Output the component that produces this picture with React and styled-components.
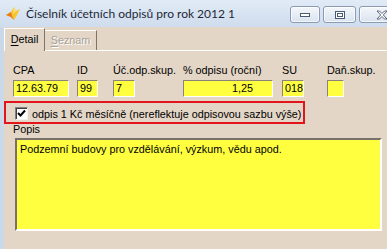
import styled, { createGlobalStyle } from "styled-components";

const GlobalStyle = createGlobalStyle`
  html, body {
    margin: 0;
    padding: 0;
    background: #e3d6c6;
  }
`;

const Window = styled.div`
  width: 387px;
  height: 249px;
  display: flex;
  flex-direction: column;
  overflow: hidden;
  background: #e3d6c6;
  font-family: "Liberation Sans", Arial, sans-serif;
  font-size: 10.8px;
  color: #000;
`;

const TitleBar = styled.div`
  height: 27px;
  flex-shrink: 0;
  display: flex;
  align-items: center;
  padding-left: 5px;
  background: linear-gradient(#e1ebf6, #cfdced);
`;

const Title = styled.span`
  margin-left: 5px;
  font-family: "Lato", "Liberation Sans", sans-serif;
  font-size: 12px;
  color: #1e2838;
  white-space: nowrap;
`;

const Controls = styled.div`
  margin-left: auto;
  margin-right: -18px;
  align-self: flex-start;
  margin-top: 6px;
  display: flex;
  gap: 3px;
  flex-shrink: 0;
`;

const CtrlButton = styled.div`
  width: ${(p) => p.$w}px;
  height: 15px;
  border: 1px solid #8a9ab3;
  border-radius: 3px;
  background: linear-gradient(#f4f7fb, #dae3ef);
  box-shadow: inset 0 0 0 1px rgba(255, 255, 255, 0.7);
  display: flex;
  align-items: center;
  justify-content: center;
`;

const Body = styled.div`
  flex: 1;
  display: flex;
  flex-direction: column;
  border-left: 4px solid #cad9ea;
`;

const TabStrip = styled.div`
  height: 23px;
  display: flex;
  align-items: flex-end;
`;

const Tab = styled.div`
  box-sizing: border-box;
  height: ${(p) => (p.$active ? 23 : 20)}px;
  width: ${(p) => p.$w}px;
  margin-bottom: ${(p) => (p.$active ? -1 : 0)}px;
  position: relative;
  z-index: ${(p) => (p.$active ? 1 : 0)};
  border-left: ${(p) => (p.$active ? "1px solid #fff" : "none")};
  border-top: 1px solid #fff;
  border-right: 1px solid #7d7467;
  background: #e3d6c6;
  display: flex;
  align-items: center;
  justify-content: center;
  padding-bottom: ${(p) => (p.$active ? 3 : 1)}px;
  color: ${(p) => (p.$active ? "#000" : "#a9a39a")};
  text-shadow: ${(p) => (p.$active ? "none" : "1px 1px 0 #fff")};

  u {
    text-decoration: underline;
    text-underline-offset: 2px;
  }
`;

const Panel = styled.div`
  flex: 1;
  border-top: 1px solid #fff;
  padding-top: 13px;
  display: flex;
  flex-direction: column;
`;

const FieldsRow = styled.div`
  display: flex;
  padding-left: 9px;
`;

const Field = styled.div`
  width: ${(p) => p.$w}px;
  display: flex;
  flex-direction: column;
  flex-shrink: 0;
`;

const Label = styled.div`
  line-height: 13px;
  height: 13px;
  white-space: nowrap;
  margin-bottom: 3px;
`;

const Input = styled.div`
  box-sizing: border-box;
  width: ${(p) => p.$w}px;
  height: 17px;
  background: #ffff40;
  border-top: 1px solid #8a8378;
  border-left: 1px solid #8a8378;
  border-right: 1px solid #fff;
  border-bottom: 1px solid #fff;
  line-height: 15px;
  padding: 0 ${(p) => (p.$right ? 19 : 2)}px 0 2px;
  text-align: ${(p) => (p.$right ? "right" : "left")};
  white-space: nowrap;
`;

const CheckRow = styled.label`
  box-sizing: border-box;
  width: 301px;
  height: 23px;
  margin-top: 4px;
  border: 2px solid #e3141b;
  display: flex;
  align-items: center;
  padding: 2px 0 0 9px;
  gap: 4px;
  white-space: nowrap;
`;

const CheckBox = styled.span`
  box-sizing: border-box;
  width: 13px;
  height: 13px;
  background: #fff;
  border-top: 1px solid #808080;
  border-left: 1px solid #808080;
  border-right: 1px solid #f4f0ea;
  border-bottom: 1px solid #f4f0ea;
  box-shadow: inset 1px 1px 0 #404040;
  display: flex;
  align-items: center;
  justify-content: center;
`;

const PopisLabel = styled.div`
  margin: -1px 0 0 9px;
  line-height: 13px;
`;

const TextArea = styled.div`
  box-sizing: border-box;
  width: 367px;
  height: 93px;
  margin: 2px 0 0 11px;
  background: #ffff40;
  border-top: 2px solid #77716a;
  border-left: 2px solid #77716a;
  border-right: 2px solid #fff;
  border-bottom: 2px solid #fff;
  padding: 3px 3px;
  line-height: 13px;
`;

function AppIcon() {
  return (
    <svg width="16" height="15" viewBox="0 0 16 15">
      <path d="M1 9 L6 6 L9 1 L11 5 L15 3 L12 9 L9 14 L6 11 Z" fill="#f7c531" />
      <path d="M1 9 L6 6 L7 10 L9 14 L6 11 Z" fill="#e87a1c" />
      <path d="M9 1 L11 5 L8 8 Z" fill="#fbe07a" />
    </svg>
  );
}

export default function App() {
  return (
    <>
      <GlobalStyle />
      <Window>
        <TitleBar>
          <AppIcon />
          <Title>Číselník účetních odpisů pro rok 2012 1</Title>
          <Controls>
            <CtrlButton $w={28}>
              <svg width="10" height="5" viewBox="0 0 10 5">
                <rect x="0.5" y="1.5" width="9" height="3" fill="#fff" stroke="#4a5a72" />
              </svg>
            </CtrlButton>
            <CtrlButton $w={31}>
              <svg width="10" height="8" viewBox="0 0 10 8">
                <rect x="0.5" y="0.5" width="9" height="7" fill="#fff" stroke="#4a5a72" />
                <rect x="2.5" y="2.5" width="5" height="3" fill="none" stroke="#4a5a72" />
              </svg>
            </CtrlButton>
            <CtrlButton $w={44}>
              <svg width="12" height="10" viewBox="0 0 12 10">
                <path
                  d="M1 1 H3.5 L6 3.5 L8.5 1 H11 L7.3 5 L11 9 H8.5 L6 6.5 L3.5 9 H1 L4.7 5 Z"
                  fill="#fff"
                  stroke="#4a5a72"
                  strokeWidth="0.9"
                />
              </svg>
            </CtrlButton>
          </Controls>
        </TitleBar>
        <Body>
          <TabStrip>
            <Tab $active $w={41}>
              <span>
                <u>D</u>etail
              </span>
            </Tab>
            <Tab $w={52}>
              <span>
                <u>S</u>eznam
              </span>
            </Tab>
          </TabStrip>
          <Panel>
            <FieldsRow>
              <Field $w={64}>
                <Label>CPA</Label>
                <Input $w={56}>12.63.79</Input>
              </Field>
              <Field $w={36}>
                <Label>ID</Label>
                <Input $w={21}>99</Input>
              </Field>
              <Field $w={70}>
                <Label>Úč.odp.skup.</Label>
                <Input $w={22}>7</Input>
              </Field>
              <Field $w={99}>
                <Label>% odpisu (roční)</Label>
                <Input $w={90} $right>
                  1,25
                </Input>
              </Field>
              <Field $w={45}>
                <Label>SU</Label>
                <Input $w={22}>018</Input>
              </Field>
              <Field $w={50}>
                <Label>Daň.skup.</Label>
                <Input $w={17} />
              </Field>
            </FieldsRow>
            <CheckRow>
              <CheckBox>
                <svg width="9" height="9" viewBox="0 0 9 9">
                  <path d="M1 4 L3.5 6.5 L8 1.5" fill="none" stroke="#000" strokeWidth="2" />
                </svg>
              </CheckBox>
              odpis 1 Kč měsíčně (nereflektuje odpisovou sazbu výše)
            </CheckRow>
            <PopisLabel>Popis</PopisLabel>
            <TextArea>Podzemní budovy pro vzdělávání, výzkum, vědu apod.</TextArea>
          </Panel>
        </Body>
      </Window>
    </>
  );
}
